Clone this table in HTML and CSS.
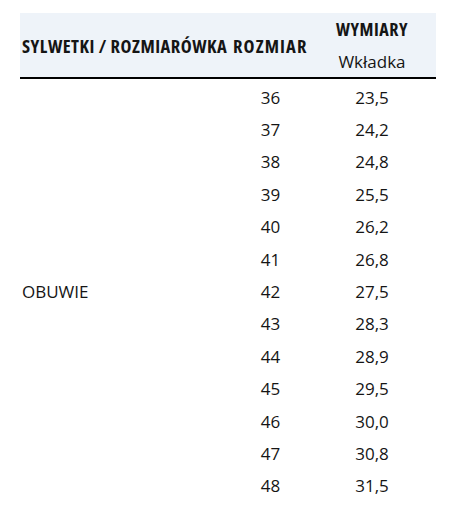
FILE: index.html
```html
<!DOCTYPE html>
<html lang="pl">
<head>
<meta charset="utf-8">
<title>Rozmiarówka</title>
<link rel="stylesheet" href="styles.css">
</head>
<body>
<div class="wrap">
<table class="sizes">
  <colgroup>
    <col class="c1"><col class="c2"><col class="c3">
  </colgroup>
  <thead>
    <tr>
      <th rowspan="2" class="h-left">SYLWETKI / ROZMIARÓWKA</th>
      <th rowspan="2" class="h-mid">ROZMIAR</th>
      <th class="h-top">WYMIARY</th>
    </tr>
    <tr>
      <th class="h-sub">Wkładka</th>
    </tr>
  </thead>
  <tbody>
    <tr><td rowspan="13" class="cat">OBUWIE</td><td>36</td><td>23,5</td></tr>
    <tr><td>37</td><td>24,2</td></tr>
    <tr><td>38</td><td>24,8</td></tr>
    <tr><td>39</td><td>25,5</td></tr>
    <tr><td>40</td><td>26,2</td></tr>
    <tr><td>41</td><td>26,8</td></tr>
    <tr><td>42</td><td>27,5</td></tr>
    <tr><td>43</td><td>28,3</td></tr>
    <tr><td>44</td><td>28,9</td></tr>
    <tr><td>45</td><td>29,5</td></tr>
    <tr><td>46</td><td>30,0</td></tr>
    <tr><td>47</td><td>30,8</td></tr>
    <tr><td>48</td><td>31,5</td></tr>
  </tbody>
</table>
</div>
</body>
</html>
```
FILE: styles.css
```css
html, body {
  margin: 0;
  padding: 0;
  background: #ffffff;
}
body {
  font-family: "Open Sans", "DejaVu Sans Condensed", sans-serif;
  font-stretch: normal;
  color: #151515;
}
.wrap {
  padding: 13px 15px 0 20px;
}
.sizes {
  width: 416px;
  border-collapse: collapse;
  table-layout: fixed;
}
.c1 { width: 213px; }
.c2 { width: 75px; }
.c3 { width: 128px; }
.sizes thead th {
  background: #eef3f9;
  padding: 0;
  white-space: nowrap;
  overflow: visible;
}
.h-left,
.h-mid {
  text-align: left;
  font-size: 18.5px;
  font-weight: bold;
  font-stretch: 75%;
  letter-spacing: 0.5px;
  padding-top: 1px !important;
  border-bottom: 2px solid #000;
}
.h-left {
  padding-left: 2px !important;
}
.h-mid {
  letter-spacing: 1.1px;
}
.h-top {
  height: 32px;
  text-align: center;
  font-size: 18px;
  font-weight: bold;
  font-stretch: 75%;
  letter-spacing: 0.5px;
  vertical-align: middle;
}
.h-sub {
  height: 32px;
  text-align: center;
  font-size: 17px;
  font-weight: normal;
  border-bottom: 2px solid #000;
}
.sizes tbody td {
  height: 32.4px;
  padding: 0;
  text-align: center;
  font-size: 17px;
  vertical-align: middle;
}
.sizes tbody tr:first-child td {
  padding-top: 2px;
}
.sizes tbody td.cat {
  text-align: left;
  padding-left: 2px;
  padding-top: 0;
}
```
